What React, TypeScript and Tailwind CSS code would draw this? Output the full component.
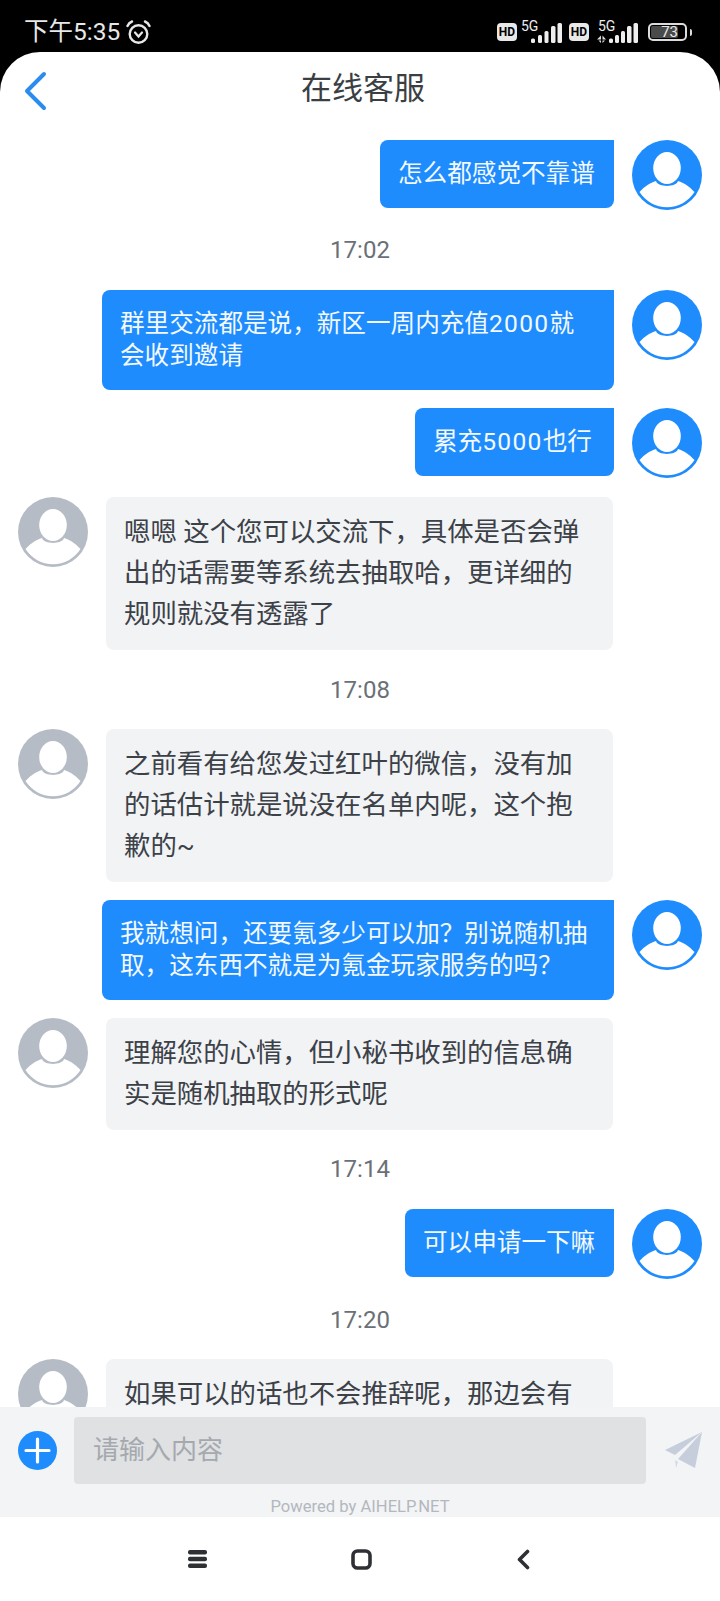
const font = { fontFamily: '"Roboto", "Noto Sans CJK SC", sans-serif' };

function Avatar({ color }: { color: string }) {
  return (
    <svg width="70" height="70" viewBox="0 0 70 70" className="shrink-0">
      <circle cx="35" cy="35" r="35" fill={color} />
      <ellipse cx="35" cy="28" rx="13.8" ry="16" fill="#fff" />
      <path d="M7.5 52 A32.5 32.5 0 0 0 62.5 52 C57 46 52 43 46 41 C44 47.5 26 47.5 24 41 C18 43 13 46 7.5 52 Z" fill="#fff" />
    </svg>
  );
}

function Sent({ children, width, mt }: { children: React.ReactNode; width: string; mt: string }) {
  return (
    <div className={`flex justify-end gap-[18px] pr-[18px] h-[70px] ${mt}`}>
      <div className={`${width} self-start whitespace-nowrap rounded-l-lg rounded-br-lg bg-[#1e8cfd] px-[18px] py-[18px] text-[24.6px] leading-[32px] text-[#f4f9ff]`}>
        {children}
      </div>
      <Avatar color="#1e8cfd" />
    </div>
  );
}

function SentLong({ children, mt }: { children: React.ReactNode; mt: string }) {
  return (
    <div className={`flex justify-end gap-[18px] pr-[18px] ${mt}`}>
      <div className="w-[512px] rounded-l-lg rounded-br-lg bg-[#1e8cfd] px-[18px] py-[18px] text-[24.6px] leading-[32px] text-[#f4f9ff]">
        {children}
      </div>
      <Avatar color="#1e8cfd" />
    </div>
  );
}

function Received({ children, mt }: { children: React.ReactNode; mt: string }) {
  return (
    <div className={`flex gap-[18px] pl-[18px] ${mt}`}>
      <Avatar color="#b6bcc5" />
      <div className="w-[507px] rounded-lg bg-[#f1f3f5] px-[18px] py-[15px] text-[26.4px] leading-[41px] text-[#3c4148]">
        {children}
      </div>
    </div>
  );
}

function Time({ children, mt }: { children: string; mt: string }) {
  return <div className={`${mt} text-center text-[24px] leading-[30px] text-[#6b7077]`}>{children}</div>;
}

function Signal({ second }: { second?: boolean }) {
  return (
    <svg width="42" height="32" viewBox="0 -4 42 32" className="shrink-0">
      <text x={second ? 1 : 0} y="11" fontSize="14" fill="#eee" fontFamily="Roboto">5G</text>
      {second && <path d="M0 19.5 L4 15.5 V19.5 Z M5.5 15.5 L9 19.5 H5.5 Z M4 20.5 V23 L1.5 20.5 Z M5.5 20.5 H8 L5.5 23 Z" fill="#ddd" />}
      <rect x={second ? 12 : 10} y="18.5" width="4" height="4.5" rx="1.5" fill="#eee" />
      <rect x={second ? 18 : 17} y="15" width="4" height="8" rx="1.5" fill="#eee" />
      <rect x={second ? 24 : 23.5} y="11" width="4" height="12" rx="1.5" fill="#eee" />
      <rect x="30" y="6" width="4.5" height="17" rx="1.5" fill="#eee" />
      <rect x="36.5" y="3" width="4.5" height="20" rx="1.5" fill="#eee" />
    </svg>
  );
}

function Hd() {
  return (
    <span className="flex h-[18px] w-[20px] shrink-0 items-center justify-center rounded-[4px] bg-[#e8e8e8] text-[12px] font-bold leading-none text-black">
      HD
    </span>
  );
}

export default function App() {
  return (
    <div className="flex h-[1601px] w-[720px] flex-col overflow-hidden bg-black" style={font}>
      <div className="flex h-[52px] shrink-0 items-center justify-between pl-[24px] pr-[28px] pt-[12px]">
        <div className="flex items-center gap-[6px] text-[24.5px] leading-none text-[#e8e8e8]">
          <span>下午5:35</span>
          <svg width="25" height="25" viewBox="0 0 25 25" fill="none" stroke="#e8e8e8" strokeWidth="2.4" strokeLinecap="round">
            <circle cx="12.5" cy="14" r="8.8" />
            <path d="M1.5 6 C2.5 3.5 4 2.2 6 1.5 M23.5 6 C22.5 3.5 21 2.2 19 1.5" />
            <path d="M9 12.5 L12.5 16.5 L16 12.5" strokeWidth="2.2" />
          </svg>
        </div>
        <div className="flex items-center">
          <Hd />
          <span className="ml-[4px] flex"><Signal /></span>
          <span className="ml-[6px] flex"><Hd /></span>
          <span className="ml-[8px] flex"><Signal second /></span>
          <div className="ml-[9px] flex items-center">
            <div className="flex h-[18px] w-[39px] items-center rounded-[5px] border-2 border-[#dcdcdc] p-px">
              <div className="flex h-[12px] w-[27px] items-center justify-end rounded-[2px] bg-[#4a4a4a] text-[15px] leading-[12px] text-[#e8e8e8]">
                73
              </div>
            </div>
            <div className="ml-[3px] h-[7px] w-[2px] rounded-r-sm bg-[#dcdcdc]" />
          </div>
        </div>
      </div>

      <div className="flex min-h-0 flex-1 flex-col overflow-hidden rounded-t-[40px] bg-white">
        <div className="grid h-[77px] shrink-0 grid-cols-[1fr_auto_1fr] items-center pb-[2px]">
          <svg width="26" height="40" viewBox="0 0 26 40" fill="none" stroke="#2a8cec" strokeWidth="4" strokeLinecap="round" strokeLinejoin="round" className="ml-[22px] mt-[2px]">
            <path d="M22 3 L5 20 L22 37" />
          </svg>
          <span className="ml-[6px] text-[31px] text-[#3b3f44]">在线客服</span>
        </div>

        <div className="min-h-0 flex-1 overflow-hidden pt-[11px]">
          <Sent width="w-[234px]" mt="mt-0">怎么都感觉不靠谱</Sent>
          <Time mt="mt-[25px]">17:02</Time>
          <SentLong mt="mt-[25px]">群里交流都是说，新区一周内充值<span className="tracking-[1.3px]">2000</span>就会收到邀请</SentLong>
          <Sent width="w-[199px]" mt="mt-[18px]">累充<span className="tracking-[1.3px]">5000</span>也行</Sent>
          <Received mt="mt-[19px]">嗯嗯 这个您可以交流下，具体是否会弹出的话需要等系统去抽取哈，更详细的规则就没有透露了</Received>
          <Time mt="mt-[25px]">17:08</Time>
          <Received mt="mt-[24px]">之前看有给您发过红叶的微信，没有加的话估计就是说没在名单内呢，这个抱歉的~</Received>
          <SentLong mt="mt-[18px]">我就想问，还要氪多少可以加？别说随机抽取，这东西不就是为氪金玩家服务的吗？</SentLong>
          <Received mt="mt-[18px]">理解您的心情，但小秘书收到的信息确实是随机抽取的形式呢</Received>
          <Time mt="mt-[24px]">17:14</Time>
          <Sent width="w-[209px]" mt="mt-[25px]">可以申请一下嘛</Sent>
          <Time mt="mt-[26px]">17:20</Time>
          <Received mt="mt-[24px]">如果可以的话也不会推辞呢，那边会有</Received>
        </div>

        <div className="h-[110px] shrink-0 bg-[#f2f4f6]">
          <div className="flex items-center pt-[10px]">
            <svg width="39" height="39" viewBox="0 0 39 39" className="ml-[18px] shrink-0">
              <circle cx="19.5" cy="19.5" r="19.5" fill="#1e8cfd" />
              <path d="M19.5 8 V31 M8 19.5 H31" stroke="#fff" strokeWidth="3.2" strokeLinecap="round" />
            </svg>
            <div className="ml-[17px] flex h-[67px] w-[572px] items-center rounded-[4px] bg-[#dfe1e3] pl-[19px] text-[26px] text-[#a5a9ae]">
              请输入内容
            </div>
            <svg width="38" height="38" viewBox="0 0 38 38" className="ml-[19px] shrink-0">
              <path d="M37 0 L0 18 L10 23 Z" fill="#c7cedb" />
              <path d="M37 0 L13 27 L30 36 Z" fill="#c7cedb" />
              <path d="M10 28 L11 36 L13 30 Z" fill="#d4d9e2" />
            </svg>
          </div>
          <div className="mt-[13px] text-center text-[16.6px] leading-[20px] text-[#b4b8bd]">Powered by AIHELP.NET</div>
        </div>

        <div className="flex h-[84px] shrink-0 items-center justify-between bg-white pl-[188px] pr-[190px]">
          <svg width="19" height="18" viewBox="0 0 19 18" fill="#2e3033">
            <rect x="0" y="0" width="19" height="4.4" rx="2" />
            <rect x="0" y="6.8" width="19" height="4.4" rx="2" />
            <rect x="0" y="13.6" width="19" height="4.4" rx="2" />
          </svg>
          <svg width="21" height="21" viewBox="0 0 21 21" fill="none" stroke="#2e3033" strokeWidth="3.6" className="mr-[2px]">
            <rect x="2" y="2" width="17" height="17" rx="4.5" />
          </svg>
          <svg width="13" height="21" viewBox="0 0 13 21" fill="none" stroke="#2e3033" strokeWidth="3.6" strokeLinecap="round" strokeLinejoin="round">
            <path d="M10.5 2.5 L2.5 10.5 L10.5 18.5" />
          </svg>
        </div>
      </div>
    </div>
  );
}
